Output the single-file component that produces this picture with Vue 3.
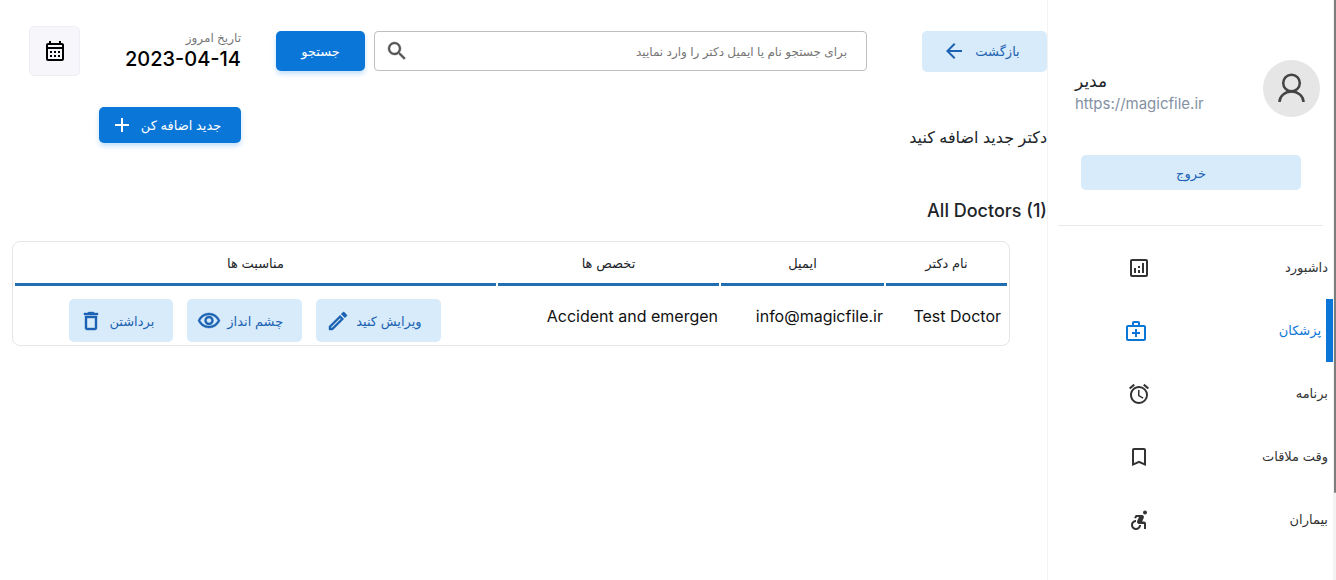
<script setup>
const menu = [
  {
    label: 'داشبورد',
    path: 'M19 3H5c-1.100 0-2 .9-2 2v14c0 1.100.9 2 2 2h14c1.100 0 2-.9 2-2V5c0-1.100-.9-2-2-2zm0 16H5V5h14v14zM7 12h2v5H7zm8-5h2v10h-2zm-4 7h2v3h-2zm0-4h2v2h-2z'
  },
  {
    label: 'پزشکان',
    active: true,
    path: 'M20 6h-4V4c0-1.100-.9-2-2-2h-4c-1.100 0-2 .9-2 2v2H4c-1.100 0-2 .9-2 2v12c0 1.100.9 2 2 2h16c1.100 0 2-.9 2-2V8c0-1.100-.9-2-2-2zM10 4h4v2h-4V4zm10 16H4V8h16v12zM13 10h-2v3H8v2h3v3h2v-3h3v-2h-3z'
  },
  {
    label: 'برنامه',
    path: 'M22 5.720l-4.600-3.860-1.290 1.530 4.600 3.860L22 5.720zM7.880 3.390L6.600 1.860 2 5.710l1.290 1.530 4.590-3.850zM12.500 8H11v6l4.750 2.850.75-1.230-4-2.370V8zM12 4c-4.970 0-9 4.030-9 9s4.020 9 9 9a9 9 0 000-18zm0 16c-3.870 0-7-3.130-7-7s3.130-7 7-7 7 3.130 7 7-3.130 7-7 7z'
  },
  {
    label: 'وقت ملاقات',
    path: 'M17 3H7c-1.100 0-1.990.9-1.990 2L5 21l7-3 7 3V5c0-1.100-.9-2-2-2zm0 15l-5-2.180L7 18V5h10v13z'
  },
  {
    label: 'بیماران',
    path: 'M14 17h-2c0 1.650-1.350 3-3 3s-3-1.350-3-3 1.350-3 3-3v-2c-2.760 0-5 2.240-5 5s2.240 5 5 5 5-2.240 5-5zm3-3.500h-1.860l1.670-3.670C17.420 8.500 16.440 7 14.960 7h-5.200c-.81 0-1.540.47-1.870 1.200L7.220 10l1.920.53L9.790 9H12l-1.830 4.100c-.6 1.330.39 2.900 1.850 2.900H17v5h2v-5.500c0-1.100-.9-2-2-2zM16 4.500a2 2 0 104 0 2 2 0 10-4 0z'
  }
]

const columns = ['نام دکتر', 'ایمیل', 'تخصص ها', 'مناسبت ها']
const doctors = [
  { name: 'Test Doctor', email: 'info@magicfile.ir', specialty: 'Accident and emergen' }
]
const actions = [
  {
    label: 'ویرایش کنید',
    path: 'M14.060 9.020l.92.92L5.920 19H5v-.92l9.060-9.060M17.660 3c-.25 0-.51.1-.7.29l-1.830 1.830 3.750 3.750 1.830-1.830c.39-.39.39-1.020 0-1.410l-2.340-2.340c-.2-.2-.45-.29-.71-.29zm-3.600 3.190L3 17.250V21h3.750L17.810 9.940l-3.750-3.750z'
  },
  {
    label: 'چشم انداز',
    path: 'M12 6c3.790 0 7.170 2.130 8.820 5.500C19.170 14.870 15.790 17 12 17s-7.170-2.130-8.820-5.500C4.830 8.130 8.210 6 12 6m0-2C7 4 2.730 7.110 1 11.500 2.730 15.890 7 19 12 19s9.270-3.110 11-7.500C21.270 7.110 17 4 12 4zm0 5a2.500 2.500 0 010 5 2.500 2.500 0 010-5m0-2c-2.480 0-4.500 2.020-4.500 4.500S9.520 16 12 16s4.500-2.020 4.500-4.500S14.480 7 12 7z'
  },
  {
    label: 'برداشتن',
    path: 'M6 19c0 1.100.9 2 2 2h8c1.100 0 2-.9 2-2V7H6v12zM8 9h8v10H8V9zm7.500-5l-1-1h-5l-1 1H5v2h14V4z'
  }
]
</script>

<template>
  <div class="page" dir="rtl">
    <div class="scroll-track"><div class="scroll-thumb"></div></div>

    <aside class="sidebar">
      <div class="profile">
        <svg class="avatar" viewBox="0 0 57 57" aria-hidden="true">
          <circle cx="28.500" cy="28.500" r="28.500" fill="#e6e6e6" />
          <circle cx="28.500" cy="23" r="8.300" fill="none" stroke="#444" stroke-width="2.500" />
          <path d="M16.500 42a12 10.500 0 0124 0" fill="none" stroke="#444" stroke-width="2.500" />
        </svg>
        <div class="identity">
          <p class="name">مدیر</p>
          <p class="site" dir="ltr">https://magicfile.ir</p>
        </div>
      </div>
      <button class="soft logout" type="button">خروج</button>
      <hr />
      <nav>
        <a v-for="item in menu" :key="item.label" href="#" :class="{ active: item.active }">
          <span>{{ item.label }}</span>
          <svg class="icon" viewBox="0 0 24 24" aria-hidden="true"><path :d="item.path" /></svg>
        </a>
      </nav>
    </aside>

    <main>
      <header>
        <button class="soft back" type="button">
          بازگشت
          <svg class="icon" viewBox="0 0 24 24" aria-hidden="true">
            <path d="M20 11H7.830l5.590-5.590L12 4l-8 8 8 8 1.410-1.410L7.830 13H20v-2z" />
          </svg>
        </button>
        <form @submit.prevent>
          <div class="field">
            <input type="search" aria-label="جستجو" placeholder="برای جستجو نام یا ایمیل دکتر را وارد نمایید" />
            <svg class="icon bold" viewBox="0 0 24 24" aria-hidden="true">
              <path d="M15.500 14h-.79l-.28-.27A6.470 6.470 0 0016 9.500 6.500 6.500 0 109.500 16c1.610 0 3.090-.59 4.230-1.570l.27.28v.79l5 4.990L20.490 19l-4.990-5zm-6 0C7.010 14 5 11.990 5 9.500S7.010 5 9.500 5 14 7.010 14 9.500 11.990 14 9.500 14z" />
            </svg>
          </div>
          <button class="primary search" type="submit">جستجو</button>
        </form>
        <div class="today">
          <div>
            <p class="caption">تاریخ امروز</p>
            <p class="date" dir="ltr">2023-04-14</p>
          </div>
          <button class="calendar" type="button" aria-label="تاریخ امروز">
            <svg class="icon" viewBox="0 0 24 24" aria-hidden="true">
              <path d="M19 4h-1V2h-2v2H8V2H6v2H5c-1.110 0-1.990.9-1.990 2L3 20a2 2 0 002 2h14c1.100 0 2-.9 2-2V6c0-1.100-.9-2-2-2zm0 16H5V10h14v10zm0-12H5V6h14v2zM9 14H7v-2h2v2zm4 0h-2v-2h2v2zm4 0h-2v-2h2v2zm-8 4H7v-2h2v2zm4 0h-2v-2h2v2zm4 0h-2v-2h2v2z" />
            </svg>
          </button>
        </div>
      </header>

      <section class="toolbar">
        <h1>دکتر جدید اضافه کنید</h1>
        <button class="primary add" type="button">
          جدید اضافه کن
          <svg class="icon" viewBox="0 0 24 24" aria-hidden="true"><path d="M19 13h-6v6h-2v-6H5v-2h6V5h2v6h6v2z" /></svg>
        </button>
      </section>

      <h2 dir="ltr">All Doctors (1)</h2>

      <div class="table-area">
        <table>
          <colgroup><col class="c-name" /><col class="c-mail" /><col class="c-spec" /><col /></colgroup>
          <thead>
            <tr><th v-for="c in columns" :key="c" scope="col">{{ c }}</th></tr>
          </thead>
          <tbody>
            <tr v-for="d in doctors" :key="d.email">
              <td class="first">{{ d.name }}</td>
              <td>{{ d.email }}</td>
              <td>{{ d.specialty }}</td>
              <td>
                <div class="actions">
                  <button v-for="a in actions" :key="a.label" class="soft action" type="button">
                    {{ a.label }}
                    <svg class="icon bold" viewBox="0 0 24 24" aria-hidden="true"><path :d="a.path" /></svg>
                  </button>
                </div>
              </td>
            </tr>
          </tbody>
        </table>
      </div>
    </main>
  </div>
</template>

<style>
body {
  background: #fff;
}
</style>

<style scoped>
.page {
  display: flex;
  min-height: 100vh;
  color: #212529;
  font-family: Inter, "DejaVu Sans", sans-serif;
  font-size: 16px;
}
.page * {
  box-sizing: border-box;
}
p,
h1,
h2 {
  margin: 0;
  font-weight: 400;
}
button {
  display: flex;
  align-items: center;
  justify-content: center;
  flex: none;
  padding: 0;
  border: 0;
  border-radius: 5px;
  font-family: inherit;
  font-size: 13px;
  white-space: nowrap;
}
.icon {
  flex: none;
  width: 24px;
  height: 24px;
  fill: currentColor;
}
.icon.bold {
  stroke: currentColor;
  stroke-width: 0.4;
}
.soft {
  background: #d8ebfa;
  color: #1b62b3;
}
.primary {
  background: #0a76d8;
  color: #fff;
  box-shadow: 0 3px 5px #57a5f059;
}

.scroll-track {
  flex: none;
  width: 3px;
  background: #f3f3f3;
}
.scroll-thumb {
  width: 2px;
  height: 85vh;
  border-radius: 0 0 2px 2px;
  background: #7d7d7d;
}

.sidebar {
  flex: none;
  width: 286px;
  border-left: 1px solid #f3f3f3;
}
.profile {
  display: flex;
  align-items: center;
  justify-content: space-between;
  padding: 60px 13px 0 27px;
}
.avatar {
  width: 57px;
  height: 57px;
}
.identity {
  display: flex;
  flex-direction: column;
  align-items: flex-end;
  padding-top: 6px;
}
.name {
  font-size: 17px;
  line-height: 24px;
}
.site {
  color: #8491a3;
  font-size: 15px;
  line-height: 22px;
}
.logout {
  width: 220px;
  height: 35px;
  margin: 38px 32px 0 0;
}
hr {
  height: 1px;
  margin: 35px 10px 10px;
  border: 0;
  background: #e8e8e8;
}
nav a {
  display: flex;
  align-items: center;
  justify-content: space-between;
  height: 63px;
  padding: 0 5px 0 79px;
  color: #333;
  font-size: 13px;
  text-decoration: none;
}
nav span {
  padding-bottom: 2px;
}
nav a.active {
  padding-left: 76px;
  border-right: 7px solid #0a76d8;
  color: #0a76d8;
}

main {
  flex: 1;
  min-width: 0;
}
header {
  display: flex;
  align-items: center;
  padding: 26px 0 0 29px;
}
.back {
  gap: 9px;
  width: 125px;
  height: 41px;
  padding-right: 7px;
}
form {
  display: flex;
  flex: 1;
  gap: 9px;
  margin: 0 55px 0 35px;
}
.field {
  display: flex;
  flex: 1;
  align-items: center;
  height: 40px;
  padding: 0 19px 0 10px;
  border: 1px solid #bfbfbf;
  border-radius: 4px;
  color: #555;
}
input {
  flex: 1;
  min-width: 0;
  padding: 0;
  border: 0;
  outline: 0;
  background: none;
  font-family: inherit;
  font-size: 12px;
}
input::placeholder {
  color: #757575;
}
.search {
  width: 89px;
  height: 40px;
}
.today {
  display: flex;
  align-items: center;
  justify-content: space-between;
  width: 212px;
}
.caption {
  color: #777;
  font-size: 12px;
  line-height: 18px;
}
.date {
  padding-bottom: 2px;
  color: #000;
  font-size: 20px;
  font-weight: 500;
  line-height: 24px;
}
.calendar {
  width: 51px;
  height: 50px;
  border: 1px solid #eeeef6;
  background: #f7f7fb;
  color: #000;
}
.toolbar {
  display: flex;
  align-items: flex-start;
  justify-content: space-between;
  padding: 31px 0 0 99px;
}
h1 {
  padding-top: 18px;
  font-size: 16px;
  line-height: 24px;
}
.add {
  gap: 7px;
  width: 142px;
  height: 36px;
  padding-right: 9px;
}
h2 {
  margin-top: 50px;
  font-size: 18px;
  font-weight: 500;
  line-height: 24px;
  text-align: right;
}
.table-area {
  padding: 18px 37px 0 12px;
}
table {
  width: 100%;
  border: 1px solid #e6e6e6;
  border-radius: 8px;
  border-spacing: 2px;
  table-layout: fixed;
}
.c-name {
  width: 121px;
}
.c-mail {
  width: 163px;
}
.c-spec {
  width: 221px;
}
th {
  height: 42px;
  padding: 0 0 2px;
  border-bottom: 3px solid #1f6fb2;
  font-size: 13px;
  font-weight: 400;
}
td {
  height: 55px;
  padding: 0 1px 0 0;
  color: #111;
  text-align: right;
  white-space: nowrap;
}
td.first {
  padding-right: 6px;
}
.actions {
  display: flex;
  justify-content: center;
  gap: 14px;
  padding-top: 10px;
}
.action {
  gap: 6px;
  height: 43px;
  padding: 0 19px 0 10px;
}
</style>
